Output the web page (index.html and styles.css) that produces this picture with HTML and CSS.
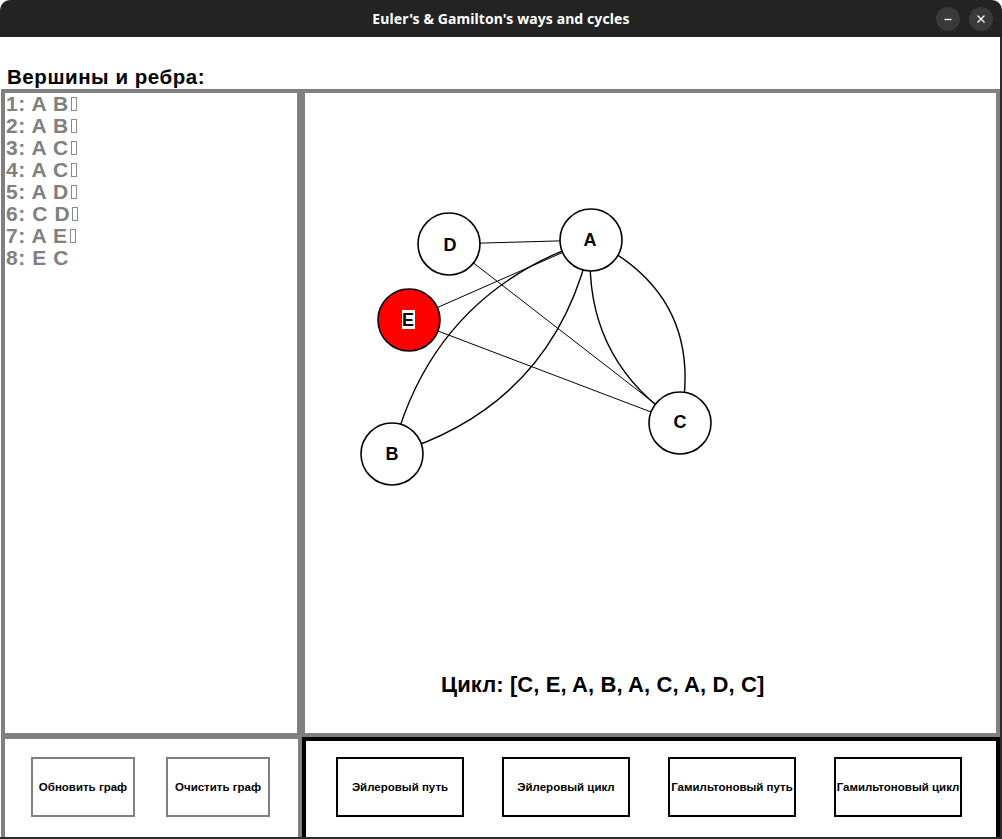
FILE: index.html
```html
<!DOCTYPE html>
<html lang="ru">
<head>
<meta charset="utf-8">
<title>Euler's &amp; Gamilton's ways and cycles</title>
<link rel="stylesheet" href="styles.css">
</head>
<body>
<div class="window">
  <div class="titlebar">
    <span class="title">Euler's &amp; Gamilton's ways and cycles</span>
    <div class="controls">
      <span class="ctl"><svg width="24" height="24" viewBox="0 0 24 24"><path d="M8.5 12.5h7" stroke="#fff" stroke-width="1.3"/></svg></span>
      <span class="ctl"><svg width="24" height="24" viewBox="0 0 24 24"><path d="M8.5 8.5l7 7M15.5 8.5l-7 7" stroke="#fff" stroke-width="1.3"/></svg></span>
    </div>
  </div>
  <div class="content">
    <div class="header"><h1 class="heading">Вершины и ребра:</h1></div>
    <div class="toprow">
      <div class="list-panel">
        <div class="item">1: A B<span class="tofu"></span></div>
        <div class="item">2: A B<span class="tofu"></span></div>
        <div class="item">3: A C<span class="tofu"></span></div>
        <div class="item">4: A C<span class="tofu"></span></div>
        <div class="item">5: A D<span class="tofu"></span></div>
        <div class="item">6: C D<span class="tofu"></span></div>
        <div class="item">7: A E<span class="tofu"></span></div>
        <div class="item">8: E C</div>
      </div>
      <div class="canvas-panel">
        <svg class="graph" width="691" height="640" viewBox="305 93 691 640">
          <g class="edges" fill="none" stroke="#000">
            <line x1="591" y1="240" x2="449" y2="244" stroke-width="1"/>
            <line x1="449" y1="244" x2="680" y2="423" stroke-width="1"/>
            <line x1="591" y1="240" x2="409" y2="320" stroke-width="1"/>
            <line x1="409" y1="320" x2="680" y2="423" stroke-width="1"/>
            <path d="M591 240 Q432 293 392 454" stroke-width="1.4"/>
            <path d="M591 240 Q555 405 392 454" stroke-width="1.4"/>
            <path d="M591 240 Q581 358 680 423" stroke-width="1.4"/>
            <path d="M591 240 Q707 296 680 423" stroke-width="1.4"/>
          </g>
          <g class="nodes" stroke="#000" stroke-width="1.6">
            <circle cx="449" cy="244" r="31" fill="#fff"/>
            <circle cx="591" cy="240" r="31" fill="#fff"/>
            <circle cx="409" cy="320" r="31" fill="#f00"/>
            <circle cx="680" cy="423" r="31" fill="#fff"/>
            <circle cx="392" cy="454" r="31" fill="#fff"/>
          </g>
          <rect x="402" y="310" width="13" height="19" fill="#fff"/>
          <g class="labels" text-anchor="middle">
            <text x="450" y="251">D</text>
            <text x="590" y="246">A</text>
            <text x="408" y="326">E</text>
            <text x="680" y="428">C</text>
            <text x="392" y="460">B</text>
          </g>
          <text class="cycle" x="441" y="692">Цикл: [C, E, A, B, A, C, A, D, C]</text>
        </svg>
      </div>
    </div>
    <div class="bottomrow">
      <div class="bl">
        <div class="btn btn-gray">Обновить граф</div>
        <div class="btn btn-gray">Очистить граф</div>
      </div>
      <div class="br">
        <div class="btn btn-black">Эйлеровый путь</div>
        <div class="btn btn-black">Эйлеровый цикл</div>
        <div class="btn btn-black">Гамильтоновый путь</div>
        <div class="btn btn-black">Гамильтоновый цикл</div>
      </div>
    </div>
  </div>
</div>
</body>
</html>
```
FILE: styles.css
```css
html, body {
  margin: 0;
  padding: 0;
}
body {
  width: 1002px;
  height: 839px;
  overflow: hidden;
  background: #fff;
  font-family: "Liberation Sans", Arial, sans-serif;
}
.window {
  width: 1002px;
  height: 839px;
  display: flex;
  flex-direction: column;
}
.titlebar {
  height: 37px;
  flex: none;
  background: #232323;
  border-radius: 10px 10px 0 0;
  position: relative;
  display: flex;
  align-items: center;
  justify-content: center;
}
.title {
  color: #fff;
  font-family: "Noto Sans", "DejaVu Sans", sans-serif;
  font-weight: bold;
  font-size: 14px;
  letter-spacing: 0.1px;
}
.controls {
  position: absolute;
  right: 9px;
  top: 7px;
  display: flex;
  gap: 9px;
}
.ctl {
  width: 24px;
  height: 24px;
  border-radius: 50%;
  background: #3a3a3a;
  display: block;
}
.ctl svg {
  display: block;
}
.content {
  flex: 1;
  display: flex;
  flex-direction: column;
  padding-left: 1px;
  border-right: 2px solid #2c2c2c;
  border-bottom: 2px solid #2c2c2c;
  min-height: 0;
}
.header {
  height: 52px;
  flex: none;
  box-sizing: border-box;
  padding: 28px 0 0 6px;
}
.heading {
  margin: 0;
  font-size: 20.5px;
  line-height: 24px;
  font-weight: bold;
  letter-spacing: 0.55px;
  color: #000;
}
.toprow {
  height: 648px;
  flex: none;
  display: flex;
}
.list-panel {
  width: 300px;
  flex: none;
  box-sizing: border-box;
  border: 4px solid #808080;
  padding-left: 1px;
}
.item {
  font-size: 21px;
  line-height: 22px;
  font-weight: bold;
  letter-spacing: 0.6px;
  color: #808080;
  white-space: nowrap;
}
.tofu {
  display: inline-block;
  width: 4px;
  height: 12px;
  border: 1px solid #8a8a8a;
  margin-left: 2px;
}
.canvas-panel {
  flex: 1;
  box-sizing: border-box;
  border: 4px solid #808080;
  overflow: hidden;
}
.graph {
  display: block;
}
.labels text {
  font-family: "Liberation Sans", Arial, sans-serif;
  font-weight: bold;
  font-size: 18px;
  fill: #000;
}
.cycle {
  font-family: "Liberation Sans", Arial, sans-serif;
  font-weight: bold;
  font-size: 22px;
  letter-spacing: 0.1px;
  fill: #000;
}
.bottomrow {
  flex: 1;
  display: flex;
  min-height: 0;
  overflow: hidden;
}
.bl {
  width: 301px;
  flex: none;
  box-sizing: border-box;
  border: 4px solid #808080;
  border-top-width: 2px;
  border-bottom: none;
  display: flex;
  align-items: flex-start;
  padding: 18px 0 0 26px;
  gap: 31px;
}
.br {
  flex: 1;
  box-sizing: border-box;
  border: 4px solid #000;
  border-bottom: none;
  display: flex;
  align-items: flex-start;
  padding: 16px 0 0 30px;
  gap: 38px;
}
.btn {
  height: 60px;
  box-sizing: border-box;
  display: flex;
  align-items: center;
  justify-content: center;
  font-weight: bold;
  font-size: 11.5px;
  color: #000;
  white-space: nowrap;
  flex: none;
}
.btn-gray {
  width: 104px;
  border: 2px solid #808080;
}
.btn-black {
  width: 128px;
  border: 2px solid #000;
}
```
